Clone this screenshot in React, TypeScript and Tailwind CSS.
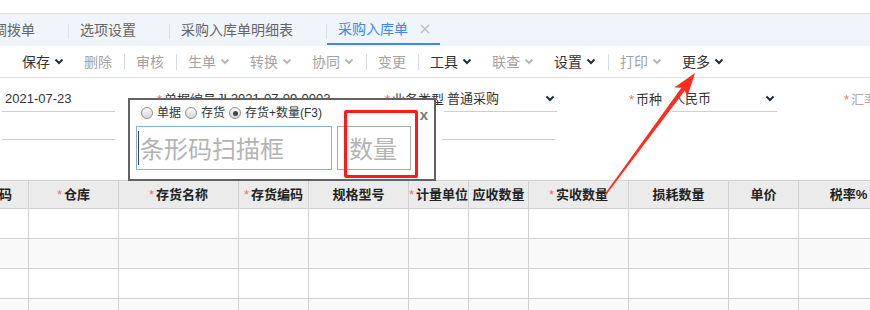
const Chevron = ({ muted }: { muted?: boolean }) => (
  <svg width="10" height="7" viewBox="0 0 10 7" className="ml-[4px]">
    <path d="M1.5 1.5 L5 5 L8.5 1.5" fill="none" stroke={muted ? "#b8b8b8" : "#1f2d3d"} strokeWidth="2" />
  </svg>
)

const Sep = () => (
  <div className="flex w-[4px] justify-center">
    <div className="h-[16px] w-px bg-[#d5dbe5]" />
  </div>
)

const Tool = ({ label, muted, menu }: { label: string; muted?: boolean; menu?: boolean }) => (
  <div className={`flex items-center px-[10px] text-[14px] ${muted ? "text-[#a3a3a3]" : "text-[#333]"}`}>
    <span>{label}</span>
    {menu && <Chevron muted={muted} />}
  </div>
)

const Star = () => <span className="mr-[2px] text-[13px] text-[#f56c6c]">*</span>

const Radio = ({ checked, label }: { checked?: boolean; label: string }) => (
  <div className="mr-[4px] flex items-center">
    <div className="flex h-[12px] w-[12px] items-center justify-center rounded-full border border-[#8f8f8f] bg-gradient-to-b from-[#fafafa] to-[#d6d6d6]">
      {checked && <div className="h-[5px] w-[5px] rounded-full bg-[#444]" />}
    </div>
    <span className="ml-[4px] text-[12px] text-[#333]">{label}</span>
  </div>
)

const cols = [
  { t: "编码", star: false },
  { t: "仓库", star: true },
  { t: "存货名称", star: true },
  { t: "存货编码", star: true },
  { t: "规格型号", star: false },
  { t: "计量单位", star: true },
  { t: "应收数量", star: false },
  { t: "实收数量", star: true },
  { t: "损耗数量", star: false },
  { t: "单价", star: false },
  { t: "税率%", star: false },
]

export default function App() {
  return (
    <div className="relative h-[310px] w-[870px] overflow-hidden bg-white font-['Liberation_Sans','Noto_Sans_CJK_SC',sans-serif] leading-none">
      <div className="h-[13px]" />

      {/* tabs */}
      <div className="flex h-[33px] items-start border-t border-[#dcdcdc] bg-[#f0f5fc] text-[14px] text-[#666]">
        <div className="ml-[-18px] flex h-[32px] items-center pl-[11px] pr-[33px]">调拨单</div>
        <div className="mt-[10px] h-[15px] w-px bg-[#dde2ea]" />
        <div className="flex h-[32px] items-center pl-[11px] pr-[33px]">选项设置</div>
        <div className="mt-[10px] h-[15px] w-px bg-[#dde2ea]" />
        <div className="flex h-[32px] items-center pl-[11px] pr-[33px]">采购入库单明细表</div>
        <div className="mt-[10px] h-[15px] w-px bg-[#dde2ea]" />
        <div className="flex h-[31px] items-center border-b-2 border-[#3d86f5] pl-[11px] pr-[10px] text-[#3d86f5]">
          <span>采购入库单</span>
          <svg width="10" height="10" viewBox="0 0 10 10" className="ml-[12px]">
            <path d="M1 1 L9 9 M9 1 L1 9" stroke="#bdbdbd" strokeWidth="1.4" />
          </svg>
        </div>
      </div>

      {/* toolbar */}
      <div className="flex h-[32px] items-center border-b border-[#e2e2e2] pl-[12px]">
        <Tool label="保存" menu />
        <Tool label="删除" muted />
        <Sep />
        <Tool label="审核" muted />
        <Sep />
        <Tool label="生单" muted menu />
        <Tool label="转换" muted menu />
        <Tool label="协同" muted menu />
        <Sep />
        <Tool label="变更" muted />
        <Sep />
        <Tool label="工具" menu />
        <Tool label="联查" muted menu />
        <Tool label="设置" menu />
        <Sep />
        <Tool label="打印" muted menu />
        <Tool label="更多" menu />
      </div>

      {/* form */}
      <div className="h-[102px] pt-[8px] text-[13px] text-[#333]">
        <div className="flex h-[26px] items-center whitespace-nowrap">
          <div className="ml-[2px] flex h-full w-[113px] shrink-0 items-center border-b border-[#cfcfcf] pl-[3px]">2021-07-23</div>
          <div className="flex h-full w-[102px] shrink-0 items-center pl-[42px]">
            <Star />
            <span>单据编号</span>
          </div>
          <div className="flex h-full w-[150px] shrink-0 items-center border-b border-[#cfcfcf]">JL2021-07-09-0003</div>
          <div className="flex h-full w-[77px] shrink-0 items-center justify-end">
            <Star />
            <span>业务类型</span>
          </div>
          <div className="flex h-full w-[113px] shrink-0 items-center justify-between border-b border-[#cfcfcf] pl-[3px] pr-[2px]">
            <span>普通采购</span>
            <Chevron />
          </div>
          <div className="flex h-full w-[115px] shrink-0 items-center justify-end pr-[10px]">
            <Star />
            <span>币种</span>
          </div>
          <div className="flex h-full w-[105px] shrink-0 items-center justify-between border-b border-[#cfcfcf] pr-[2px]">
            <span>人民币</span>
            <Chevron />
          </div>
          <div className="flex h-full w-[120px] shrink-0 items-center pl-[67px] text-[#aaa]">
            <Star />
            <span>汇率</span>
          </div>
        </div>
        <div className="flex h-[28px]">
          <div className="ml-[2px] w-[113px] border-b border-[#cfcfcf]" />
          <div className="w-[102px]" />
          <div className="w-[150px] border-b border-[#cfcfcf]" />
          <div className="w-[75px]" />
          <div className="w-[113px] border-b border-[#cfcfcf]" />
        </div>
      </div>

      {/* grid */}
      <div className="grid grid-cols-[29px_90px_120px_70px_100px_60px_60px_100px_100px_70px_100px]">
        {cols.map((c, i) => (
          <div
            key={c.t}
            className={`flex h-[29px] items-center overflow-hidden whitespace-nowrap border-y border-r border-[#d2d2d2] bg-[#ebebeb] text-[13px] font-bold text-[#222] ${i === 0 ? "justify-end pr-[16px]" : "justify-center"}`}
          >
            {c.star && <span className="mr-[2px] font-normal text-[#f56c6c]">*</span>}
            {c.t}
          </div>
        ))}
        {[0, 1, 2, 3].map((r) =>
          cols.map((c) => (
            <div
              key={`${r}-${c.t}`}
              className={`h-[30px] border-b border-r border-[#d2d2d2] ${r % 2 ? "bg-[#f9f9f9]" : "bg-white"}`}
            />
          ))
        )}
      </div>

      {/* scan popup */}
      <div className="absolute left-[128px] top-[98px] h-[83px] w-[308px] border-2 border-[#626262] bg-white">
        <div className="mt-[5px] flex h-[16px] items-center pl-[11px]">
          <Radio label="单据" />
          <Radio label="存货" />
          <Radio label="存货+数量(F3)" checked />
        </div>
        <span className="absolute right-[6px] top-[7px] text-[15px] font-bold text-[#777]">x</span>
        <div className="ml-[6px] mt-[5px] flex">
          <div className="flex h-[44px] w-[196px] items-center border border-[#86aee6] pl-[1px] font-['Noto_Sans_CJK_SC',sans-serif] text-[24px] text-[#b3b3b3]">
            <div className="mr-px h-[34px] w-px bg-[#444]" />
            <span>条形码扫描框</span>
          </div>
          <div className="ml-[5px] flex h-[44px] w-[74px] items-center border border-[#ababab] pl-[11px] font-['Noto_Sans_CJK_SC',sans-serif] text-[24px] text-[#b3b3b3]">
            数量
          </div>
        </div>
      </div>

      {/* red highlight box */}
      <div className="absolute left-[344px] top-[110px] h-[68px] w-[74px] rounded-[2px] border-[3px] border-[#ff1a1a]" />

      {/* red arrow */}
      <svg className="pointer-events-none absolute left-0 top-0" width="870" height="310" viewBox="0 0 870 310">
        <polygon
          points="695,73 687.2,97.1 684.9,90.4 605.6,195.5 604.4,194.5 681.4,87.8 674.3,87.6"
          fill="#ff2d1f"
        />
      </svg>
    </div>
  )
}
